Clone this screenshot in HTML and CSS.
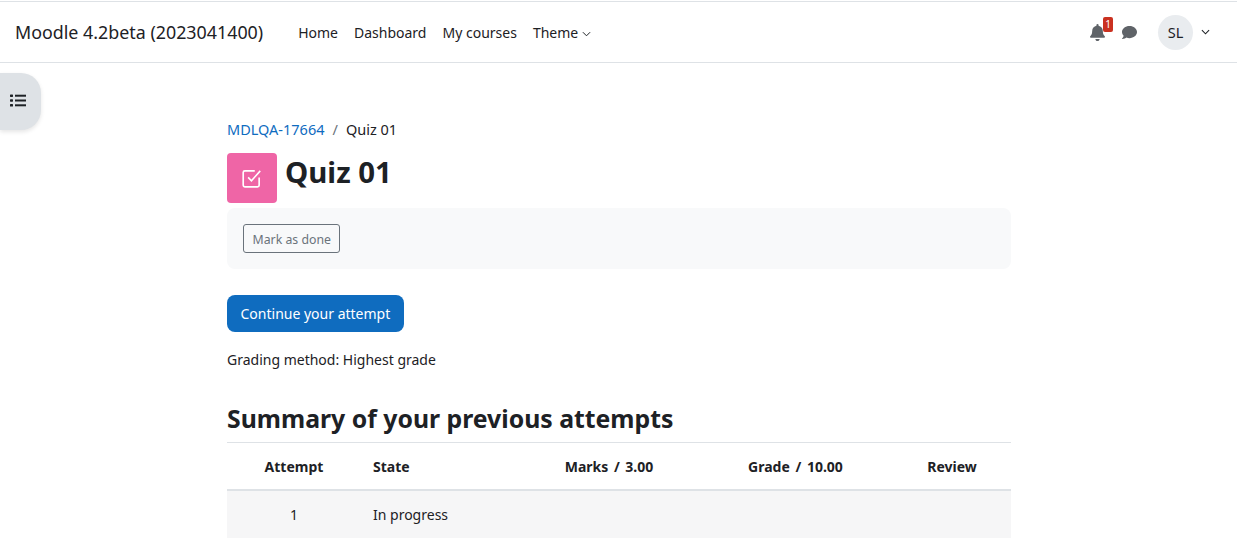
FILE: index.html
```html
<!DOCTYPE html>
<html lang="en">
<head>
  <meta charset="UTF-8" />
  <title>Quiz 01</title>
  <link rel="stylesheet" href="styles.css">
</head>
<body>
  <nav class="navbar">
    <a class="brand">Moodle 4.2beta (2023041400)</a>
    <ul class="nav-links">
      <li>Home</li>
      <li>Dashboard</li>
      <li>My courses</li>
      <li>Theme
        <svg class="caret-small" viewBox="0 0 10 6"><path d="M1 1l4 4 4-4" fill="none" stroke="#1d2125" stroke-width="1.1"/></svg>
      </li>
    </ul>
    <div class="nav-right">
      <div class="bell">
        <svg width="15" height="17" viewBox="0 0 448 512"><path fill="#5f6368" d="M224 512c35 0 64-29 64-64H160c0 35 29 64 64 64zm215-150c-19-21-55-52-55-154 0-78-54-140-128-155V32a32 32 0 0 0-64 0v21C118 68 64 130 64 208c0 102-36 133-55 154-6 6-9 14-9 22 0 16 13 32 32 32h384c19 0 32-16 32-32 0-8-3-16-9-22z"/></svg>
        <span class="badge">1</span>
      </div>
      <svg class="chat" width="17" height="15" viewBox="0 0 512 512"><path fill="#5f6368" d="M256 32C115 32 0 125 0 240c0 50 22 95 58 131-13 51-55 96-56 97-2 2-3 6-1 9s4 3 7 3c67 0 118-32 143-52 32 12 67 20 105 20 141 0 256-93 256-208S397 32 256 32z"/></svg>
      <div class="avatar">SL</div>
      <svg class="caret" viewBox="0 0 10 6"><path d="M1 1l4 4 4-4" fill="none" stroke="#1d2125" stroke-width="1.2"/></svg>
    </div>
  </nav>

  <button class="drawer-toggle" type="button">
    <svg width="16" height="13" viewBox="0 0 16 13">
      <g fill="#1d2125">
        <rect x="0" y="0.5" width="3" height="2.4" rx="0.6"/>
        <rect x="0" y="5.3" width="3" height="2.4" rx="0.6"/>
        <rect x="0" y="10.1" width="3" height="2.4" rx="0.6"/>
        <rect x="5" y="0.7" width="11" height="2"/>
        <rect x="5" y="5.5" width="11" height="2"/>
        <rect x="5" y="10.3" width="11" height="2"/>
      </g>
    </svg>
  </button>

  <main class="page">
    <div class="breadcrumb"><a>MDLQA-17664</a><span class="sep">/</span><span>Quiz 01</span></div>

    <div class="page-head">
      <div class="quiz-icon">
        <svg width="22" height="22" viewBox="0 0 20 20" fill="none" stroke="#fff" stroke-width="1.5">
          <path d="M16.5 9.5v7a1.5 1.5 0 0 1-1.5 1.5H3.500a1.500 1.500 0 0 1-1.500-1.500V5a1.500 1.500 0 0 1 1.500-1.500h9"/>
          <path d="M6.500 9.500l3 3 8-9"/>
        </svg>
      </div>
      <h1>Quiz 01</h1>
    </div>

    <div class="completion">
      <button class="btn-outline" type="button">Mark as done</button>
    </div>

    <button class="btn-primary" type="button">Continue your attempt</button>

    <p class="grading">Grading method: Highest grade</p>

    <h2>Summary of your previous attempts</h2>

    <table class="attempts">
      <thead>
        <tr>
          <th class="col-attempt">Attempt</th>
          <th class="col-state">State</th>
          <th class="col-marks">Marks / 3.00</th>
          <th class="col-grade">Grade / 10.00</th>
          <th class="col-review">Review</th>
        </tr>
      </thead>
      <tbody>
        <tr>
          <td class="col-attempt">1</td>
          <td class="col-state">In progress</td>
          <td></td>
          <td></td>
          <td></td>
        </tr>
      </tbody>
    </table>
  </main>
</body>
</html>
```

FILE: styles.css
```css
* {
  box-sizing: border-box;
}

html, body {
  height: 554px;
  overflow: hidden;
}

body {
  margin: 0;
  background: #fff;
  color: #1d2125;
  font-family: "Noto Sans", "Open Sans", sans-serif;
  font-size: 14px;
  line-height: 21px;
}

.navbar {
  display: flex;
  align-items: center;
  height: 62px;
  margin-top: 1px;
  padding: 0 26px 0 15px;
  border-top: 1px solid #dee2e6;
  border-bottom: 1px solid #dee2e6;
}

.brand {
  font-size: 17.85px;
  margin-right: 35px;
}

.nav-links {
  display: flex;
  gap: 16px;
  list-style: none;
  margin: 0;
  padding: 0;
}

.caret-small {
  width: 9px;
  height: 6px;
  margin-bottom: 1px;
}

.nav-right {
  display: flex;
  align-items: center;
  margin-left: auto;
}

.bell {
  position: relative;
  display: flex;
  margin-right: 16px;
}

.badge {
  position: absolute;
  top: -7px;
  left: 13px;
  width: 10px;
  height: 15px;
  border-radius: 2px;
  background: #ca3120;
  color: #fff;
  font-size: 10px;
  line-height: 15px;
  text-align: center;
}

.chat {
  margin-right: 20px;
}

.avatar {
  width: 35px;
  height: 35px;
  border-radius: 50%;
  background: #e9ecef;
  font-size: 14.5px;
  line-height: 35px;
  text-align: center;
  margin-right: 8px;
}

.caret {
  width: 9px;
  height: 6px;
  margin-right: 1px;
}

.drawer-toggle {
  position: absolute;
  top: 73px;
  left: 0;
  width: 41px;
  height: 57px;
  padding: 0 5px 0 0;
  border: 0;
  border-radius: 0 20px 20px 0;
  background: #dee2e6;
  box-shadow: 0 2px 4px rgba(0, 0, 0, 0.1);
}

.page {
  width: 784px;
  margin-left: 227px;
  padding-top: 56px;
}

.breadcrumb {
  display: flex;
  height: 21px;
  font-size: 14.5px;
  color: #1d2125;
}

.breadcrumb a {
  color: #0f6cbf;
}

.sep {
  margin: 0 8px;
  color: #6a737b;
}

.page-head {
  display: flex;
  margin-top: 13px;
}

.quiz-icon {
  display: flex;
  align-items: center;
  justify-content: center;
  width: 50px;
  height: 50px;
  border-radius: 4px;
  background: #ef65a6;
  margin-right: 8px;
}

h1 {
  margin: 0;
  font-size: 29.4px;
  line-height: 38px;
  font-weight: 700;
}

.completion {
  height: 61px;
  margin-top: 5px;
  padding: 16px;
  border-radius: 8px;
  background: #f8f9fa;
}

.btn-outline {
  display: block;
  height: 29px;
  padding: 1px 8.5px 0;
  border: 1px solid #6a737b;
  border-radius: 3px;
  background: transparent;
  color: #6a737b;
  font: inherit;
  font-size: 12.3px;
}

.btn-primary {
  display: block;
  height: 37px;
  margin-top: 26px;
  padding: 0 13.5px;
  border: 0;
  border-radius: 8px;
  background: #0f6cbf;
  color: #fff;
  font: inherit;
}

.grading {
  margin: 17px 0 0;
}

h2 {
  margin: 33px 0 0;
  font-size: 24.8px;
  line-height: 30px;
  font-weight: 700;
}

.attempts {
  width: 100%;
  margin-top: 9px;
  border-collapse: collapse;
  table-layout: fixed;
}

.attempts th {
  height: 47px;
  padding: 2px 0 0;
  border-top: 1px solid #dee2e6;
  border-bottom: 2px solid #dee2e6;
  font-weight: 700;
}

.attempts td {
  height: 48px;
  padding: 1px 0 0;
  background: #f6f6f7;
}

.col-attempt {
  width: 134px;
  text-align: center;
}

.attempts th.col-state, .attempts td.col-state {
  width: 159px;
  padding-left: 12px;
  text-align: left;
}

.col-marks {
  width: 178px;
  text-align: center;
  word-spacing: 2px;
}

.col-grade {
  width: 195px;
  text-align: center;
  word-spacing: 2px;
}

.col-review {
  text-align: center;
}
```
